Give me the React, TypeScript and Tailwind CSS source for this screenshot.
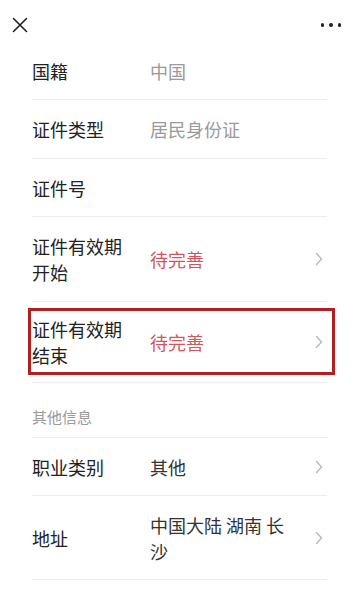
import React from "react";

const Chevron = () => (
  <svg width="8" height="14" viewBox="0 0 8 14" className="shrink-0">
    <path d="M1.5 1.5 L6.5 7 L1.5 12.5" fill="none" stroke="#b8b8b8" strokeWidth="1.4" strokeLinecap="round" strokeLinejoin="round" />
  </svg>
);

type RowProps = {
  label: React.ReactNode;
  value?: React.ReactNode;
  valueClass?: string;
  chevron?: boolean;
  h: string;
};

const Row = ({ label, value, valueClass = "", chevron, h }: RowProps) => (
  <div className={`flex items-center border-b border-[#ececec] ${h}`}>
    <div className="w-[100px] shrink-0 text-[18px] leading-[26px] text-[#222]">{label}</div>
    <div className={`ml-[18px] w-[146px] text-[18px] leading-[26px] ${valueClass}`}>{value}</div>
    <div className="ml-auto mr-[4px] flex items-center">{chevron ? <Chevron /> : null}</div>
  </div>
);

export default function App() {
  return (
    <div
      className="w-[359px] h-[600px] overflow-hidden bg-white"
      style={{ fontFamily: '"Noto Sans CJK SC", "Noto Sans", sans-serif' }}
    >
      <div className="flex h-[42px] items-center justify-between pl-[12px] pr-[18px] pt-[8px]">
        <svg width="16" height="16" viewBox="0 0 16 16">
          <path d="M1.5 1.5 L14.5 14.5 M14.5 1.5 L1.5 14.5" stroke="#222" strokeWidth="1.6" strokeLinecap="round" />
        </svg>
        <div className="flex gap-[5px]">
          <span className="h-[3.5px] w-[3.5px] rounded-full bg-[#222]" />
          <span className="h-[3.5px] w-[3.5px] rounded-full bg-[#222]" />
          <span className="h-[3.5px] w-[3.5px] rounded-full bg-[#222]" />
        </div>
      </div>
      <div className="pl-[32px] pr-[32px]">
        <Row h="h-[58px]" label="国籍" value="中国" valueClass="text-[#9a9a9a]" />
        <Row h="h-[59px]" label="证件类型" value="居民身份证" valueClass="text-[#9a9a9a]" />
        <Row h="h-[58px]" label="证件号" value="" />
        <Row h="h-[85px]" label="证件有效期开始" value="待完善" valueClass="text-[#d2555e]" chevron />
        <div className="relative">
          <Row h="h-[81px]" label="证件有效期结束" value="待完善" valueClass="text-[#d2555e]" chevron />
          <div className="pointer-events-none absolute left-[-4px] right-[-8px] top-[6px] h-[67px] border-[3px] border-[#b3201f]" />
        </div>
        <div className="flex h-[55px] items-center border-b border-[#ececec] pt-[14px] text-[15px] text-[#9a9a9a]">
          其他信息
        </div>
        <Row h="h-[58px]" label="职业类别" value="其他" valueClass="text-[#333]" chevron />
        <Row h="h-[84px]" label="地址" value="中国大陆 湖南 长沙" valueClass="text-[#333]" chevron />
        <Row h="h-[58px]" label="手机号" value="" chevron />
      </div>
    </div>
  );
}
